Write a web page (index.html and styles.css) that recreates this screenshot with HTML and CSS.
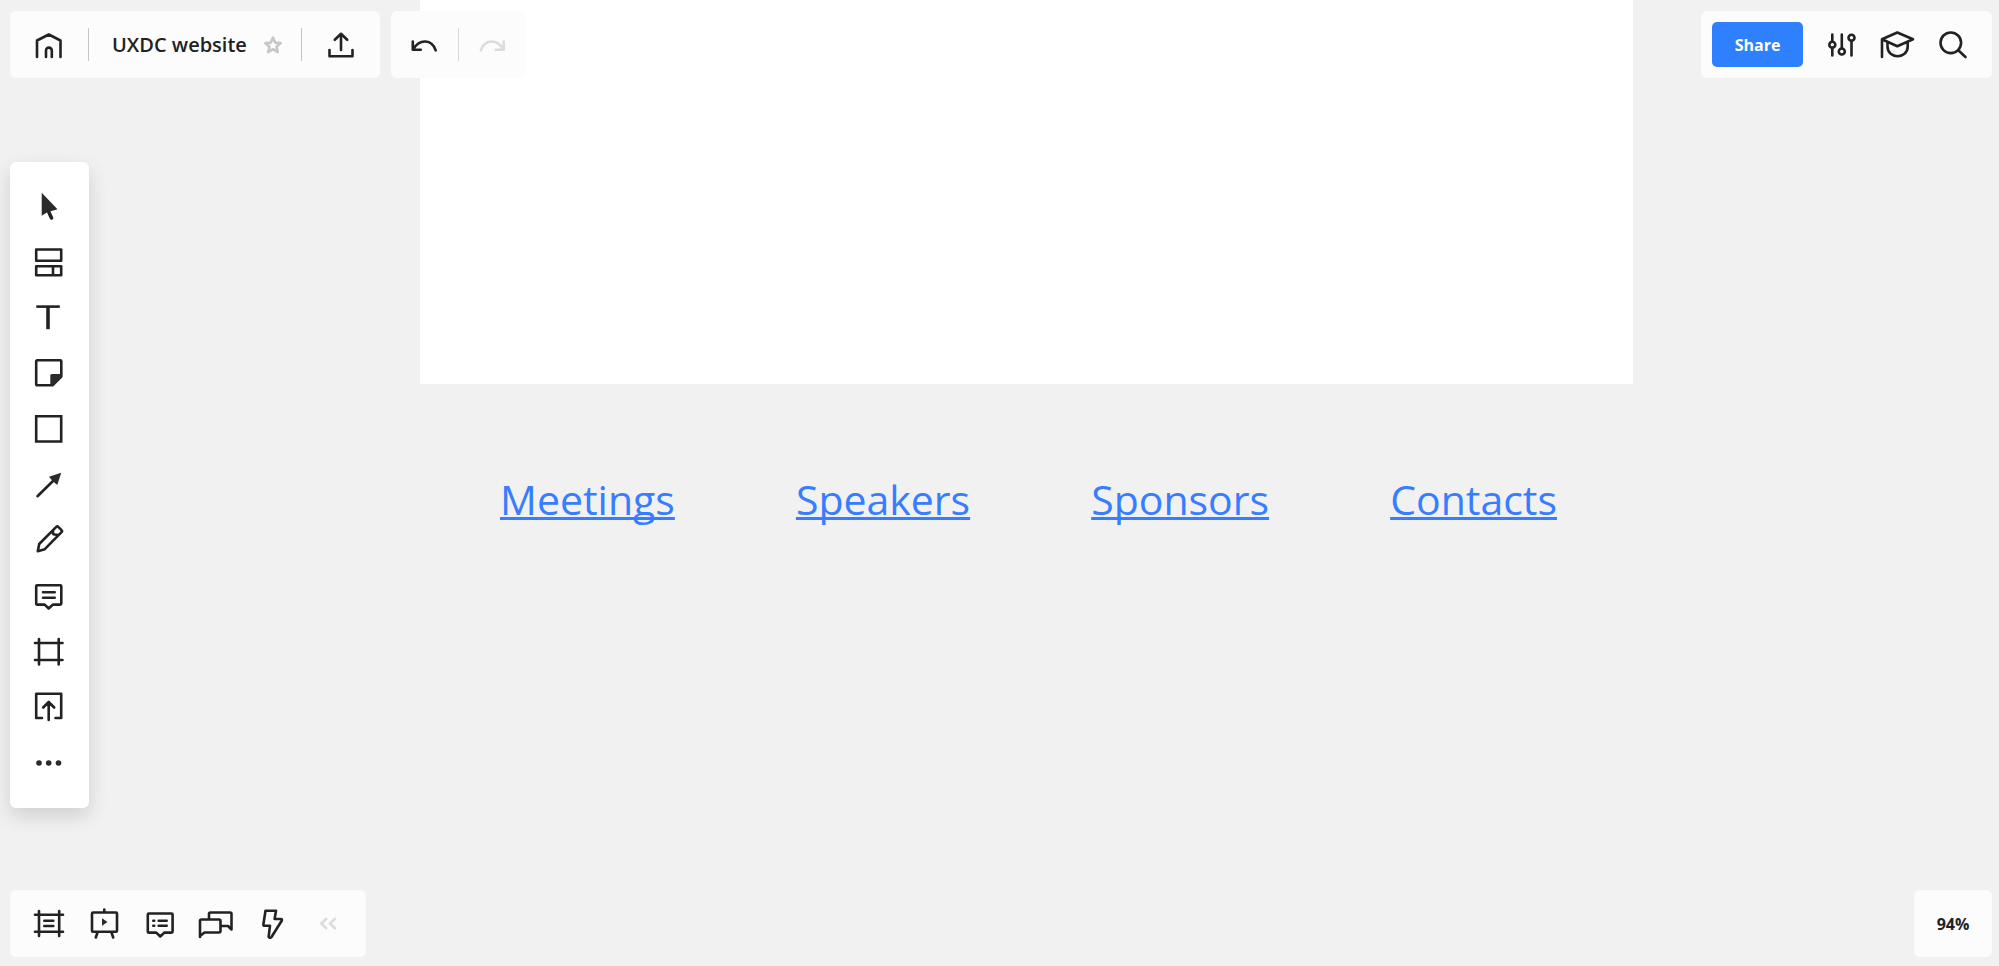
FILE: index.html
```html
<!DOCTYPE html>
<html lang="en">
<head>
<meta charset="utf-8">
<meta name="viewport" content="width=device-width, initial-scale=1">
<title>UXDC website</title>
<link rel="stylesheet" href="styles.css">
</head>
<body>
<div class="app">
  <main class="canvas">
    <div class="frame"></div>
    <nav class="links" aria-label="Site">
      <a href="#meetings">Meetings</a>
      <a href="#speakers">Speakers</a>
      <a href="#sponsors">Sponsors</a>
      <a href="#contacts">Contacts</a>
    </nav>
  </main>

  <div class="chrome">
    <header class="row">
      <div class="panel">
        <button class="tool wide" aria-label="Home"><svg class="icon" viewBox="0 0 32 32"><path d="M4 28V11.500L15.800 5.500 27.500 11.500V28M13 28V21.500a2.800 2.800 0 0 1 5.800 0V28"/></svg></button>
        <span class="divider"></span>
        <h1 class="title">UXDC website</h1>
        <button class="star" aria-label="Favorite"><svg class="icon faint" viewBox="0 0 32 32"><path d="M16 8.500 18.200 13.600 23.700 14.100 19.500 17.700 20.800 23.100 16 20.200 11.200 23.100 12.500 17.700 8.300 14.100 13.800 13.600Z"/></svg></button>
        <span class="divider after-star"></span>
        <button class="tool wide" aria-label="Export"><svg class="icon" viewBox="0 0 32 32"><path d="M4.500 21V27.300H27.500V21M16 21V5M9.800 10.800 16 4.800 22.200 10.800"/></svg></button>
      </div>
      <div class="panel">
        <button class="tool history" aria-label="Undo"><svg class="icon" viewBox="0 0 32 32"><path d="M4.800 12.500V20.800H12.800M5.500 20C11.500 9.500 24 10 27.700 21.300"/></svg></button>
        <span class="divider light"></span>
        <button class="tool history" aria-label="Redo" disabled><svg class="icon disabled" viewBox="0 0 32 32"><path d="M27.700 12.500V20.800H19.700M27 20C21 9.500 8.500 10 4.800 21.300"/></svg></button>
      </div>
      <div class="panel actions">
        <button class="share">Share</button>
        <button class="tool" aria-label="Settings"><svg class="icon" viewBox="0 0 32 32"><path d="M6.300 5.500V12.800M6.300 18.800V26.500M15.800 5.500V19.500M25.500 11.800V26.500"/><circle cx="6.300" cy="15.800" r="3"/><circle cx="15.800" cy="22.500" r="3"/><circle cx="25.500" cy="8.800" r="3"/></svg></button>
        <button class="tool" aria-label="Learning center"><svg class="icon" viewBox="0 0 32 32"><path d="M0 28V10.300L15.300 3.500 31 10.300 15.300 17.300 0 10.300M5.500 13.500V17.500C5.500 30.500 25.700 30.500 25.700 17.500V13.500"/></svg></button>
        <button class="tool" aria-label="Search"><svg class="icon" viewBox="0 0 32 32"><circle cx="12.800" cy="13.800" r="10.300"/><path d="M20.300 21.200 27.500 28"/></svg></button>
      </div>
    </header>

    <div class="toolbar" role="toolbar" aria-label="Drawing tools">
      <button class="tool" aria-label="Select"><svg class="icon" viewBox="0 0 32 32"><path class="solid" d="M8.700 2.700V25.700L14.300 22.300 24.500 19.300Z"/><path class="thick" d="M15.800 22 18.500 28"/></svg></button>
      <button class="tool" aria-label="Templates"><svg class="icon" viewBox="0 0 32 32"><path d="M3.200 3.500H28.200V14.700H3.200ZM3.200 20.200H28.200V29.200H3.200ZM20 20.200V29.200"/></svg></button>
      <button class="tool" aria-label="Text"><svg class="icon" viewBox="0 0 32 32"><path class="butt" d="M3.300 5.600H26.800"/><path class="butt thick" d="M15 5.600V28.200"/></svg></button>
      <button class="tool" aria-label="Sticky note"><svg class="icon" viewBox="0 0 32 32"><path d="M4.200 3.300H27.200Q28.300 3.300 28.300 4.300V19.500L19.500 28.300H4.200Q3.200 28.300 3.200 27.300V4.300Q3.200 3.300 4.200 3.300Z"/><path class="solid" d="M28.500 17H18.800Q17.300 17 17.300 18.500V28.500H19.500L28.500 19.500Z"/></svg></button>
      <button class="tool" aria-label="Shape"><svg class="icon" viewBox="0 0 32 32"><path class="sharp" d="M3.200 3.200H28.200V28.500H3.200Z"/></svg></button>
      <button class="tool" aria-label="Connection line"><svg class="icon" viewBox="0 0 32 32"><path d="M4.500 27.200 21 11"/><path class="solid" d="M28.200 3.800 24.300 16 21.300 13.500 18.500 10.700 16 7.800Z"/></svg></button>
      <button class="tool" aria-label="Pen"><svg class="icon" viewBox="0 0 32 32"><path d="M4.800 27.200 6.200 20 23.300 2.900Q24.300 1.900 25.300 2.900L28.500 6.100Q29.500 7.100 28.500 8.100L11.800 25.200ZM20 6.200V9Q20 10.500 21.500 10.500L25.500 11"/></svg></button>
      <button class="tool" aria-label="Comment"><svg class="icon" viewBox="0 0 32 32"><path d="M4.200 5.200H27.200Q28.300 5.200 28.300 6.200V23.500Q28.300 24.600 27.200 24.600H19.800L15.700 28.500 11.700 24.600H4.200Q3.200 24.600 3.200 23.500V6.200Q3.200 5.200 4.200 5.200ZM10 12.200H21.700M10 17.700H21.700"/></svg></button>
      <button class="tool" aria-label="Frame"><svg class="icon" viewBox="0 0 32 32"><path d="M6 3V28.500M25.700 3V28.500M2 7H29.500M2 24H29.500"/></svg></button>
      <button class="tool" aria-label="Upload"><svg class="icon" viewBox="0 0 32 32"><path d="M9 27H3.200V2.800H28.200V27H22.500M15.700 29V11.300M10.200 16.500 15.700 11 21.200 16.500"/></svg></button>
      <button class="tool" aria-label="More"><svg class="icon" viewBox="0 0 32 32"><g class="solid"><circle cx="6" cy="16" r="2.800"/><circle cx="15.700" cy="16" r="2.800"/><circle cx="25.500" cy="16" r="2.800"/></g></svg></button>
    </div>

    <footer class="row">
      <div class="panel dock">
        <button class="tool" aria-label="Frames"><svg class="icon" viewBox="0 0 32 32"><path d="M7 3V28M27.200 3V28M3 6.700H31M3 23.700H31M12.300 12.700H21.300M12.300 18H21.300"/></svg></button>
        <button class="tool" aria-label="Presentation"><svg class="icon" viewBox="0 0 32 32"><path d="M5 4.500H28Q29 4.500 29 5.500V22.800Q29 23.800 28 23.800H5Q4 23.800 4 22.800V5.500Q4 4.500 5 4.500ZM16.300 1.500V4.500M9.500 24.500 7.800 29.500M23.500 24.500 25.200 29.500"/><path class="solid" d="M14 10.200 19.500 14 14 17.800Z"/></svg></button>
        <button class="tool" aria-label="Comments"><svg class="icon" viewBox="0 0 32 32"><path d="M4.800 5.500H27.500Q28.600 5.500 28.600 6.500V23.500Q28.600 24.600 27.500 24.600H20.300L16.300 28.500 12.300 24.600H4.800Q3.800 24.600 3.800 23.500V6.500Q3.800 5.500 4.800 5.500ZM9.300 12.700H10.200M9.300 17.700H10.200M14.700 12.700H22.700M14.700 17.700H22.700"/></svg></button>
        <button class="tool" aria-label="Chat"><svg class="icon" viewBox="0 0 32 32"><path d="M0 29V13Q0 11.500 1.500 11.500H19Q20.500 11.500 20.500 13V23Q20.500 24.500 19 24.500H4.500L0 28M9 11V6Q9 4.500 10.500 4.500H30Q31.500 4.500 31.500 6V21.500L28 18H21"/></svg></button>
        <button class="tool" aria-label="Activities"><svg class="icon" viewBox="0 0 32 32"><path d="M9.500 2.800H20L18.600 11H24.700Q26.500 11 25.700 12.800L15.500 29Q14.700 30 13.500 29.700 12.500 29.400 12.700 28.300L14 17.700H8.500Q7.200 17.700 7.400 16.300Z"/></svg></button>
        <button class="tool" aria-label="Collapse"><svg class="icon disabled" viewBox="0 0 32 32"><path d="M14.300 10.800 9.300 15.500 14.300 20.200M23 10.800 18 15.500 23 20.200"/></svg></button>
      </div>
      <button class="panel zoom">94%</button>
    </footer>
  </div>
</div>
</body>
</html>
```
FILE: styles.css
```css
* {
  box-sizing: border-box;
}

body {
  margin: 0;
  background: #f1f1f1;
  color: #222;
  font-family: "Open Sans", "Noto Sans", sans-serif;
}

button {
  margin: 0;
  padding: 0;
  border: 0;
  background: none;
  color: inherit;
  font: inherit;
  cursor: pointer;
}

/* The board and the controls share one grid cell, controls on top. */
.app {
  display: grid;
  grid-template-columns: minmax(0, 1fr);
  min-height: 100vh;
}

.canvas,
.chrome {
  grid-area: 1 / 1;
}

.canvas {
  display: grid;
  grid-template-columns: 420px minmax(0, 1fr) 366px;
  grid-template-rows: 384px auto;
}

.frame {
  grid-column: 2;
  background: #fff;
}

.links {
  grid-column: 2;
  display: flex;
  justify-content: space-between;
  padding: 86px 76px 0 80px;
  font-size: 41px;
  line-height: 58px;
}

.links a {
  color: #377dff;
  text-decoration-thickness: 3px;
  text-decoration-skip-ink: none;
}

.chrome {
  z-index: 1;
  display: flex;
  flex-direction: column;
  padding: 11px 7px 9px 10px;
}

.row {
  display: flex;
  gap: 11px;
}

.panel {
  display: flex;
  align-items: center;
  height: 67px;
  border-radius: 6px;
  background: #fcfcfc;
}

.actions {
  margin-left: auto;
  padding: 0 10px 0 11px;
}

.dock {
  padding: 0 10px;
}

.tool {
  display: flex;
  align-items: center;
  justify-content: center;
  width: 56px;
  height: 56px;
}

.wide {
  width: 78px;
}

.history {
  width: 67px;
}

.star {
  display: flex;
  width: 32px;
  margin-left: 10px;
}

.divider {
  width: 1px;
  height: 33px;
  background: #c4c4c4;
}

.after-star {
  margin-left: 12px;
}

.light {
  background: #dadada;
}

.title {
  margin: 0 0 0 23px;
  font-size: 20px;
  font-weight: 600;
  line-height: 28px;
}

.share {
  width: 91px;
  height: 45px;
  margin-right: 11px;
  border-radius: 5px;
  background: #2f80ff;
  color: #fff;
  font-size: 16px;
  font-weight: 700;
}

.toolbar {
  display: flex;
  flex: 1;
  flex-direction: column;
  align-items: center;
  width: 79px;
  margin: 84px 0 82px;
  padding: 16px 2px 17px 0;
  border-radius: 6px;
  background: #fff;
  box-shadow: 0 8px 20px rgba(0, 0, 0, 0.14);
}

.toolbar .tool {
  flex: 1;
  min-height: 36px;
}

.zoom {
  justify-content: center;
  width: 78px;
  margin-left: auto;
  font-size: 16px;
  font-weight: 700;
}

.icon {
  display: block;
  width: 32px;
  height: 32px;
  overflow: visible;
  fill: none;
  stroke: #222;
  stroke-width: 2.6;
  stroke-linecap: round;
  stroke-linejoin: round;
}

.faint {
  stroke: #c8c8c8;
}

.disabled {
  stroke: #dcdcdc;
}

.solid {
  fill: #2b2b2b;
  stroke: none;
}

.thick {
  stroke-width: 3.6;
}

.butt {
  stroke-linecap: butt;
}

.sharp {
  stroke-linejoin: miter;
}
```
